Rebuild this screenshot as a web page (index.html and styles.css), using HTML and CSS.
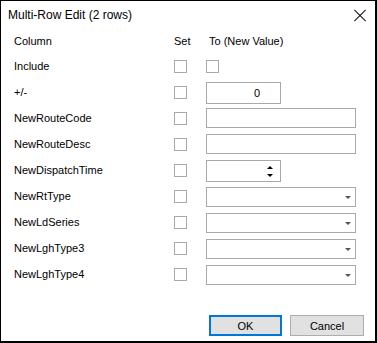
FILE: index.html
```html
<!doctype html>
<html lang="en">
  <head>
    <meta charset="UTF-8" />
    <title>Multi-Row Edit</title>
    <link rel="stylesheet" href="styles.css">
  </head>
  <body>
    <div class="dialog">
      <div class="titlebar">
        <span class="title">Multi-Row Edit (2 rows)</span>
        <span class="close"></span>
      </div>

      <div class="form">
        <!-- header -->
        <div class="head">Column</div>
        <div class="head">Set</div>
        <div class="head head-value">To (New Value)</div>

        <div class="label">Include</div>
        <div class="cell"><span class="check"></span></div>
        <div class="cell"><span class="check"></span></div>

        <div class="label">+/-</div>
        <div class="cell"><span class="check"></span></div>
        <div class="cell"><span class="box box-num">0</span></div>

        <div class="label">NewRouteCode</div>
        <div class="cell"><span class="check"></span></div>
        <div class="cell"><span class="box box-text"></span></div>

        <div class="label">NewRouteDesc</div>
        <div class="cell"><span class="check"></span></div>
        <div class="cell"><span class="box box-text"></span></div>

        <div class="label">NewDispatchTime</div>
        <div class="cell"><span class="check"></span></div>
        <div class="cell">
          <span class="box box-num box-spin">
            <span class="spin-up"></span>
            <span class="spin-down"></span>
          </span>
        </div>

        <div class="label">NewRtType</div>
        <div class="cell"><span class="check"></span></div>
        <div class="cell"><span class="box box-combo"><span class="drop"></span></span></div>

        <div class="label">NewLdSeries</div>
        <div class="cell"><span class="check"></span></div>
        <div class="cell"><span class="box box-combo"><span class="drop"></span></span></div>

        <div class="label">NewLghType3</div>
        <div class="cell"><span class="check"></span></div>
        <div class="cell"><span class="box box-combo"><span class="drop"></span></span></div>

        <div class="label">NewLghType4</div>
        <div class="cell"><span class="check"></span></div>
        <div class="cell"><span class="box box-combo"><span class="drop"></span></span></div>
      </div>

      <div class="buttons">
        <button class="btn btn-default">OK</button>
        <button class="btn">Cancel</button>
      </div>
    </div>
  </body>
</html>
```

FILE: styles.css
```css
body {
  margin: 0;
  font-family: 'Liberation Sans', Arial, sans-serif;
  color: #000;
  background: #fff;
}

.dialog {
  width: 377px;
  height: 343px;
  box-sizing: border-box;
  border: 1px solid #000;
  border-right-width: 2px;
  border-bottom-width: 2px;
  background: #fff;
  display: flex;
  flex-direction: column;
}

.titlebar {
  height: 27px;
  display: flex;
  align-items: center;
  justify-content: space-between;
  padding: 0 9px 0 7px;
}

.title {
  font-size: 12px;
  padding-top: 1px;
}

.close {
  position: relative;
  width: 12px;
  height: 12px;
  margin-top: 2px;
}

.close::before,
.close::after {
  content: '';
  position: absolute;
  left: -2px;
  top: 5px;
  width: 16px;
  height: 1px;
  background: #111;
  transform: rotate(45deg);
}

.close::after {
  transform: rotate(-45deg);
}

.form {
  display: grid;
  grid-template-columns: 160px 32px 150px;
  grid-template-rows: 25px;
  grid-auto-rows: 26px;
  padding-left: 13px;
  font-size: 11px;
}

.head,
.label,
.cell {
  display: flex;
  align-items: center;
}

.head {
  padding-top: 1px;
}

.head-value {
  padding-left: 3px;
}

.check {
  width: 11px;
  height: 11px;
  border: 1px solid #a9a9a9;
  background: #fff;
}

.box {
  box-sizing: border-box;
  border: 1px solid #a9a9a9;
  background: #fff;
  position: relative;
  display: flex;
  align-items: center;
}

.box-num {
  width: 75px;
  height: 22px;
  justify-content: flex-end;
  padding-right: 20px;
  margin-top: 1px;
}

.box-text,
.box-combo {
  width: 150px;
  height: 20px;
}

.box-combo {
  margin-top: 1px;
}

.spin-up,
.spin-down {
  position: absolute;
  right: 7px;
  width: 0;
  height: 0;
  border-left: 3px solid transparent;
  border-right: 3px solid transparent;
}

.spin-up {
  top: 5px;
  border-bottom: 3px solid #000;
}

.spin-down {
  top: 13px;
  border-top: 3px solid #000;
}

.drop {
  position: absolute;
  right: 4px;
  top: 8px;
  width: 0;
  height: 0;
  border-left: 3px solid transparent;
  border-right: 3px solid transparent;
  border-top: 3px solid #555;
}

.buttons {
  margin-top: auto;
  display: flex;
  justify-content: flex-end;
  gap: 8px;
  padding: 0 11px 5px 0;
}

.btn {
  box-sizing: border-box;
  width: 74px;
  height: 21px;
  margin: 0;
  padding: 0;
  font-family: 'Liberation Sans', Arial, sans-serif;
  font-size: 11px;
  color: #000;
  background: #e1e1e1;
  border: 1px solid #adadad;
  border-radius: 0;
}

.btn-default {
  width: 73px;
  border: 2px solid #0078d7;
}
```
